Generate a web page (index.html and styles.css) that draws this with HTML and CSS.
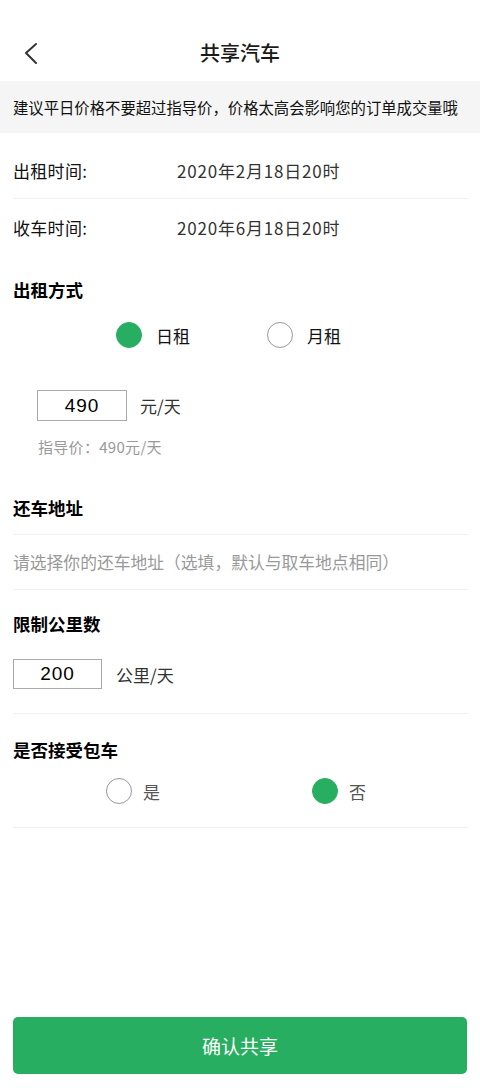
FILE: index.html
```html
<!DOCTYPE html>
<html lang="zh-CN">
<head>
<meta charset="utf-8">
<title>共享汽车</title>
<link rel="stylesheet" href="styles.css">
</head>
<body>
<div class="page">
  <header class="nav">
    <span class="back">
      <svg width="16" height="24" viewBox="0 0 16 24"><path d="M12 2 L2 11 L12 21" fill="none" stroke="#333" stroke-width="2" stroke-linecap="round" stroke-linejoin="round"/></svg>
    </span>
    <h1 class="nav-title">共享汽车</h1>
  </header>
  <div class="notice">建议平日价格不要超过指导价，价格太高会影响您的订单成交量哦</div>

  <main class="content">
    <div class="info-row bordered"><span class="info-label">出租时间:</span><span class="info-value">2020年2月18日20时</span></div>
    <div class="info-row tall"><span class="info-label">收车时间:</span><span class="info-value">2020年6月18日20时</span></div>

    <h2 class="heading h-mode">出租方式</h2>
    <div class="radios radios-mode">
      <label class="radio wide"><span class="dot on"></span><span class="radio-text">日租</span></label>
      <label class="radio wide"><span class="dot"></span><span class="radio-text">月租</span></label>
    </div>
    <div class="price-row">
      <span class="box">490</span><span class="unit">元/天</span>
    </div>
    <div class="hint">指导价：490元/天</div>

    <h2 class="heading h-addr">还车地址</h2>
    <div class="addr">请选择你的还车地址（选填，默认与取车地点相同）</div>

    <h2 class="heading h-km">限制公里数</h2>
    <div class="km-row">
      <span class="box box-km">200</span><span class="unit unit-km">公里/天</span>
    </div>

    <h2 class="heading h-bao">是否接受包车</h2>
    <div class="radios radios-bao">
      <label class="radio narrow yes"><span class="dot"></span><span class="radio-text gray">是</span></label>
      <label class="radio narrow"><span class="dot on"></span><span class="radio-text gray">否</span></label>
    </div>
  </main>

  <div class="footer">
    <button class="confirm">确认共享</button>
  </div>
</div>
</body>
</html>
```

FILE: styles.css
```css
* { box-sizing: border-box; }
html, body { margin: 0; padding: 0; background: #fff; }
body {
  font-family: "Noto Sans CJK SC", "Noto Sans", sans-serif;
  color: #111;
}
.page {
  display: flex;
  flex-direction: column;
  min-height: 1088px;
}
.nav {
  height: 81px;
  padding-top: 25px;
  position: relative;
  display: flex;
  align-items: center;
  justify-content: center;
}
.back {
  position: absolute;
  left: 24px;
  top: 42px;
  width: 16px;
  height: 24px;
  display: block;
}
.back svg { display: block; }
.nav-title {
  margin: 0;
  font-size: 20px;
  font-weight: 500;
  color: #1a1a1a;
  line-height: 56px;
}
.notice {
  height: 52px;
  background: #f5f5f5;
  padding-left: 13px;
  font-size: 15.35px;
  line-height: 52px;
  color: #111;
  white-space: nowrap;
}
.content {
  padding: 0 12px 0 13px;
}
.info-row {
  display: flex;
  align-items: center;
  height: 55px;
  margin-top: 10px;
  font-size: 17px;
}
.info-row.bordered { border-bottom: 1px solid #f0f0f0; height: 56px; }
.info-row.tall { margin-top: 0; height: 56px; }
.info-label { width: 164px; color: #111; letter-spacing: 0.3px; }
.info-value { color: #333; letter-spacing: 0.8px; }

.heading {
  margin: 0;
  height: 40px;
  line-height: 40px;
  font-size: 17.5px;
  font-weight: 700;
  color: #000;
}
.h-mode { margin-top: 15px; }
.radios {
  display: flex;
  align-items: center;
  height: 40px;
}
.radios-mode { margin-top: 5px; padding-left: 103px; }
.radio {
  display: flex;
  align-items: center;
}
.radio.wide { width: 151px; gap: 14px; }
.radio.narrow { gap: 11px; }
.radio.yes { width: 206px; }
.dot {
  width: 26px;
  height: 26px;
  border-radius: 50%;
  border: 1.5px solid #999;
  background: #fff;
  flex: none;
}
.dot.on { background: #27ae60; border-color: #27ae60; }
.radio-text { font-size: 17px; color: #111; }
.radio-text.gray { color: #555; }

.price-row {
  display: flex;
  align-items: center;
  margin-top: 35px;
  padding-left: 24px;
  height: 31px;
}
.box {
  width: 90px;
  height: 31px;
  border: 1px solid #aaa;
  display: flex;
  align-items: center;
  justify-content: center;
  font-family: "Liberation Sans", Arial, sans-serif;
  font-size: 19px;
  color: #000;
  letter-spacing: 1px;
}
.unit { margin-left: 13px; font-size: 17px; color: #333; }
.hint {
  margin-top: 16px;
  padding-left: 25px;
  height: 20px;
  line-height: 20px;
  font-size: 15px;
  letter-spacing: 0.3px;
  color: #999;
}
.h-addr { margin-top: 31px; }
.addr {
  margin-top: 6px;
  border-top: 1px solid #f0f0f0;
  border-bottom: 1px solid #f0f0f0;
  height: 56px;
  line-height: 54px;
  font-size: 16.8px;
  color: #999;
  white-space: nowrap;
}
.h-km { margin-top: 14px; }
.km-row {
  display: flex;
  align-items: center;
  margin-top: 15px;
  padding-bottom: 24px;
  border-bottom: 1px solid #f0f0f0;
}
.box-km { width: 89px; height: 30px; }
.unit-km { margin-left: 14px; }
.h-bao { margin-top: 16px; }
.radios-bao {
  margin-top: 1px;
  padding-left: 93px;
  padding-bottom: 16px;
  height: 57px;
  border-bottom: 1px solid #f0f0f0;
}
.footer {
  margin-top: auto;
  padding: 0 13px 14px 13px;
}
.confirm {
  width: 100%;
  height: 57px;
  border: none;
  border-radius: 5px;
  background: #27ae60;
  color: #fff;
  font-family: "Noto Sans CJK SC", sans-serif;
  font-size: 19px;
  display: block;
}
```
